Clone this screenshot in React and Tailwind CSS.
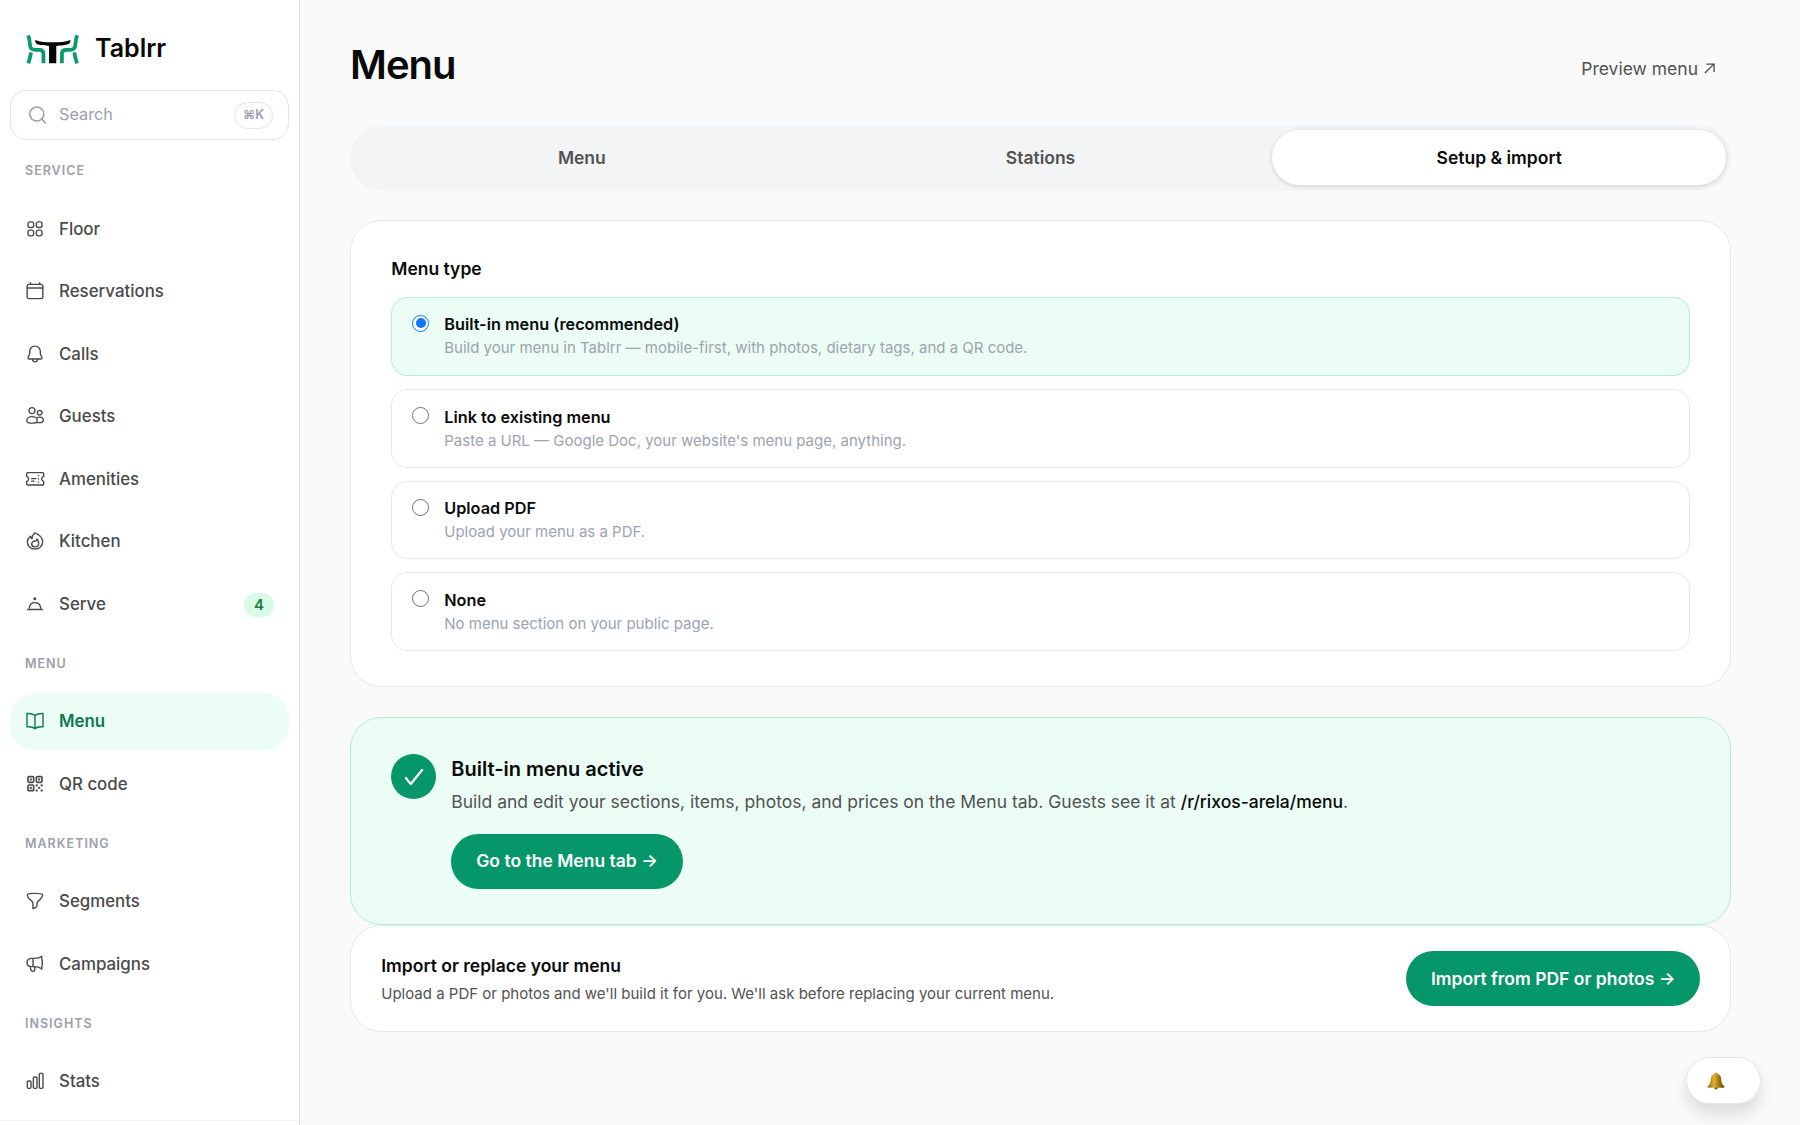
import React, { useState } from 'react';
import clsx from 'clsx';

const Icon = ({ children, className }) => (
  <svg
    viewBox="0 0 60 60"
    className={clsx('w-5 h-5 shrink-0', className)}
    fill="none"
    stroke="currentColor"
    strokeWidth="4.2"
    strokeLinecap="round"
    strokeLinejoin="round"
  >
    {children}
  </svg>
);

const icons = {
  floor: (
    <Icon>
      <rect x="9" y="8.5" width="17" height="17" rx="6" />
      <rect x="34" y="8.5" width="17" height="17" rx="6" />
      <rect x="9" y="33.5" width="17" height="17" rx="6" />
      <rect x="34" y="33.5" width="17" height="17" rx="6" />
    </Icon>
  ),
  calendar: (
    <Icon>
      <rect x="6.5" y="10" width="47" height="43" rx="6" />
      <path d="M7 21h46M16 5v5M44 5v5" />
    </Icon>
  ),
  bell: (
    <Icon>
      <path d="M30 6.500c-10 0-16 7-16 16v6c0 6-5 9-5 13.500 0 2 1 3 3 3h36c2 0 3-1 3-3 0-4.500-5-7.500-5-13.500v-6c0-9-6-16-16-16z" />
      <path d="M22 46c1 5 4 7.500 8 7.500s7-2.500 8-7.500" />
    </Icon>
  ),
  guests: (
    <Icon>
      <circle cx="21" cy="14" r="9" />
      <circle cx="44" cy="20" r="7" />
      <path d="M5.500 44c0-7 7-12 15.500-12s15.500 5 15.500 12c0 5-6 7.500-15.500 7.500S5.500 49 5.500 44z" />
      <path d="M36 35.500c2-1.500 5-2 8-2 6.500 0 11 4 11 8.500S51 50 44 50h-8" />
    </Icon>
  ),
  ticket: (
    <Icon>
      <path d="M8 11h45c2 0 3 1 3 3v8c-4 1-6 4-6 7.500s2 6.500 6 7.500v8c0 2-1 3-3 3H8c-2 0-3-1-3-3v-8c4-1 6-4 6-7.500S9 23 5 22v-8c0-2 1-3 3-3z" />
      <path d="M20 29h13M20 36.500h7M40.500 19v1M40.500 29v1M40.500 38.500v1" />
    </Icon>
  ),
  flame: (
    <Icon>
      <path d="M30 5.500c-6 5-9 11-9 18-3-1-4-4-4.500-8C10 21 7 27 7 32c0 13 10 22 23 22s23-9 23-22c0-10-8-20-23-26.500z" />
      <path d="M36 24c-1 4-3 6-6 7-2-1-4-1-5 0-3 2-5 5-5 8 0 5 4 8.500 10 8.500s11-4 11-10c0-5-2-10-5-13.500z" />
    </Icon>
  ),
  cloche: (
    <Icon>
      <circle cx="29.500" cy="14.500" r="2.500" fill="currentColor" />
      <path d="M8 46.500h44M13 42c1-10 8-16 17-16s16 6 17 16" />
    </Icon>
  ),
  book: (
    <Icon>
      <path d="M30 13c-5-4-13-6-24-5.500v40c11-.5 19 1 24 5.500 5-4.500 13-6 24-5.500v-40C43 7 35 9 30 13zM30 13v39" />
    </Icon>
  ),
  qr: (
    <Icon>
      <g strokeWidth="5">
        <rect x="9" y="8" width="17" height="17" rx="3" />
        <rect x="34" y="8" width="17" height="17" rx="3" />
        <rect x="9" y="33" width="17" height="17" rx="3" />
      </g>
      <g fill="currentColor" stroke="none">
        <rect x="14.5" y="13.5" width="6" height="6" />
        <rect x="39.5" y="13.5" width="6" height="6" />
        <rect x="14.5" y="38.5" width="6" height="6" />
        <rect x="32" y="31" width="6" height="6" />
        <rect x="47" y="31" width="6" height="6" />
        <rect x="39.5" y="38.5" width="6" height="6" />
        <rect x="32" y="46.5" width="6" height="6" />
        <rect x="47" y="46.5" width="6" height="6" />
      </g>
    </Icon>
  ),
  funnel: (
    <Icon>
      <path d="M7 11c0-2 10-4 23-4s23 2 23 4c0 8-5 12-12 18-4 3-5 6-5 10v6c0 3-9 8-12 8V39c0-4-1-7-5-10C12 23 7 19 7 11z" />
    </Icon>
  ),
  megaphone: (
    <Icon>
      <path d="M51 7c-7 5-15 6-24 6h-7C11 13 6 18 6 25.500S11 38 20 38h7c9 0 17 2 24 7M49 8c4 12 4 25 0 37M24 14v24M16 39c0 7 3 13 9 13 4 0 5-4 4-13" />
    </Icon>
  ),
  stats: (
    <Icon>
      <rect x="7" y="30" width="11" height="22" rx="3" />
      <rect x="25" y="18" width="11" height="34" rx="3" />
      <rect x="43" y="7" width="11" height="45" rx="3" />
    </Icon>
  ),
};

const sections = [
  {
    title: 'SERVICE',
    items: [
      { label: 'Floor', icon: 'floor' },
      { label: 'Reservations', icon: 'calendar' },
      { label: 'Calls', icon: 'bell' },
      { label: 'Guests', icon: 'guests' },
      { label: 'Amenities', icon: 'ticket' },
      { label: 'Kitchen', icon: 'flame' },
      { label: 'Serve', icon: 'cloche', badge: 4 },
    ],
  },
  {
    title: 'MENU',
    items: [
      { label: 'Menu', icon: 'book', active: true },
      { label: 'QR code', icon: 'qr' },
    ],
  },
  {
    title: 'MARKETING',
    items: [
      { label: 'Segments', icon: 'funnel' },
      { label: 'Campaigns', icon: 'megaphone' },
    ],
  },
  {
    title: 'INSIGHTS',
    items: [{ label: 'Stats', icon: 'stats' }],
  },
];

const tabs = ['Menu', 'Stations', 'Setup & import'];

const menuTypes = [
  {
    id: 'builtin',
    title: 'Built-in menu (recommended)',
    text: 'Build your menu in Tablrr — mobile-first, with photos, dietary tags, and a QR code.',
  },
  {
    id: 'link',
    title: 'Link to existing menu',
    text: "Paste a URL — Google Doc, your website's menu page, anything.",
  },
  { id: 'pdf', title: 'Upload PDF', text: 'Upload your menu as a PDF.' },
  { id: 'none', title: 'None', text: 'No menu section on your public page.' },
];

const Logo = () => (
  <svg viewBox="78 104 162 88" className="w-[54px] h-[29px]" fill="none">
    <g stroke="#0b9a69" strokeWidth="11.5">
      <path d="M83 105c7 10 4 28 8 37 3 6 8 7 16 7h10c9 0 13 4 13 12v29" />
      <path d="M92 157c-1 12-4 21-8 33" />
      <path d="M233 105c-7 10-4 28-8 37-3 6-8 7-16 7h-10c-9 0-13 4-13 12v29" />
      <path d="M224 157c1 12 4 21 8 33" />
    </g>
    <path
      d="M105 119c15 6 32 7 53 7s38-1 54-7c0 8-3 12-10 14-9 3-21 3-33 4v53h-22v-53c-12-1-24-1-33-4-6-2-9-6-9-14z"
      fill="#050505"
    />
  </svg>
);

const Sidebar = () => (
  <aside className="w-[300px] shrink-0 h-full bg-white border-r border-[#e0e2e4] flex flex-col">
    <div className="flex-1 overflow-hidden px-[10px]">
      <div className="h-[90px] pl-4 pt-[35px] flex items-start gap-[15px]">
        <Logo />
        <span className="text-[25px] leading-[30px] -mt-[2px] font-semibold text-[#0a0a0a]">Tablrr</span>
      </div>
      <div className="h-[50px] flex items-center rounded-[16px] border border-[#e2e4e7] pl-[17px] pr-[15px]">
        <svg viewBox="0 0 20 20" className="w-5 h-5" fill="none" stroke="#9ca0a8" strokeWidth="1.600" strokeLinecap="round">
          <circle cx="8.800" cy="9" r="7" />
          <path d="M13.800 14l3.700 4" />
        </svg>
        <span className="ml-[11px] pb-px text-[16.25px] text-[#9ca0a8]">Search</span>
        <span className="ml-auto h-[27px] w-[39px] flex items-center justify-center rounded-full border border-[#e2e4e7] text-[12.5px] font-semibold text-[#9a9ea7]">
          ⌘K
        </span>
      </div>
      {sections.map((section) => (
        <div key={section.title}>
          <div className="h-[60px] pt-[3px] pl-[15px] flex items-center text-[12.5px] font-semibold tracking-[1px] text-[#9ca0aa]">
            {section.title}
          </div>
          <div className="flex flex-col gap-[5px]">
            {section.items.map((item) => (
              <a
                key={item.label}
                className={clsx(
                  'h-[57.5px] flex items-center pl-[15px] pr-[15px] gap-[14px] rounded-[25px] text-[16.875px]',
                  item.active ? 'bg-[#ebfdf5] text-[#0b7a55] font-semibold' : 'text-[#4a4a4a] font-medium'
                )}
              >
                {icons[item.icon]}
                <span className="pt-[1.5px]">{item.label}</span>
                {item.badge && (
                  <span className="ml-auto mt-[3px] w-[30px] h-6 rounded-full bg-[#d9fae6] text-[#14803c] text-[15px] font-semibold flex items-center justify-center">
                    {item.badge}
                  </span>
                )}
              </a>
            ))}
          </div>
        </div>
      ))}
    </div>
    <div className="h-[5px] border-t border-[#eceef0]" />
  </aside>
);

const MenuTypeCard = ({ selected, onSelect }) => (
  <section className="mt-[29px] h-[467px] rounded-[31px] border border-[#e6e8ea] bg-white px-[40.25px] pt-[35px]">
    <h2 className="text-[17.5px] leading-[25px] font-semibold text-[#0a0a0a]">Menu type</h2>
    <div className="mt-[15.5px] flex flex-col gap-[13px]">
      {menuTypes.map((type) => {
        const checked = type.id === selected;
        return (
          <label
            key={type.id}
            className={clsx(
              'rounded-[16px] border flex items-start pl-5',
              checked
                ? 'h-[79.5px] pt-[14.5px] bg-[#ebfdf5] border-[#b0f0d2]'
                : 'h-[78.5px] pt-[14.5px] bg-white border-[#e6e8ea]'
            )}
          >
            <input type="radio" className="sr-only" checked={checked} onChange={() => onSelect(type.id)} />
            <span
              className={clsx(
                'mt-[2.5px] w-[17px] h-[17px] rounded-full flex items-center justify-center bg-white',
                checked ? 'border-[1.5px] border-[#0a75ff]' : 'border border-[#707070]'
              )}
            >
              {checked && <span className="w-[10px] h-[10px] rounded-full bg-[#0a75ff]" />}
            </span>
            <span className="ml-[15px] flex flex-col">
              <span className="text-[16.25px] leading-[24px] font-semibold text-[#0a0a0a]">{type.title}</span>
              <span className="text-[15px] leading-[23px] text-[#9ca3af]">{type.text}</span>
            </span>
          </label>
        );
      })}
    </div>
  </section>
);

const ActiveCard = () => (
  <section className="mt-[30px] h-[208px] rounded-[31px] border border-[#b0f0d2] bg-[#ebfdf5] pl-[40.25px] pt-9 flex items-start gap-[15px]">
    <span className="w-[45px] h-[45px] rounded-full bg-[#059669] flex items-center justify-center">
      <svg viewBox="0 0 20 20" className="w-5 h-5" fill="none" stroke="white" strokeWidth="2.200" strokeLinecap="round" strokeLinejoin="round">
        <path d="M1.800 11l5 6L18.300 2.800" />
      </svg>
    </span>
    <div>
      <h2 className="text-[20px] leading-[31px] font-semibold text-[#0a0a0a]">Built-in menu active</h2>
      <p className="mt-[3px] text-[17.5px] leading-[28px] text-[#525252]">
        Build and edit your sections, items, photos, and prices on the Menu tab. Guests see it at{' '}
        <span className="font-medium text-[#0a0a0a]">/r/rixos-arela/menu</span>.
      </p>
      <button className="mt-[17.5px] h-[55px] px-[25px] rounded-full bg-[#059669] text-white text-[17.5px] font-semibold">
        Go to the Menu tab →
      </button>
    </div>
  </section>
);

const ImportCard = () => (
  <section className="h-[107px] rounded-[31px] border border-[#e6e8ea] bg-white pl-[30.25px] pr-[30px] flex items-center justify-between">
    <div className="pt-[2px]">
      <h2 className="text-[17.5px] leading-[26px] font-semibold text-[#0a0a0a]">Import or replace your menu</h2>
      <p className="mt-[2px] text-[15px] leading-[25px] text-[#525252]">
        Upload a PDF or photos and we'll build it for you. We'll ask before replacing your current menu.
      </p>
    </div>
    <button className="h-[55px] px-[24.5px] pt-px rounded-full bg-[#059669] text-white text-[17.5px] font-semibold">
      Import from PDF or photos →
    </button>
  </section>
);

const App = () => {
  const [tab, setTab] = useState('Setup & import');
  const [menuType, setMenuType] = useState('builtin');

  return (
    <div className="w-[1800px] h-[1125px] overflow-hidden flex bg-[#fafafa] font-['Inter',sans-serif] antialiased">
      <Sidebar />
      <main className="flex-1 pl-[50px] pr-[69px]">
        <header className="h-[125px] flex items-start justify-between pr-4">
          <h1 className="mt-10 text-[40px] leading-[50px] tracking-[-1px] font-semibold text-[#0a0a0a]">Menu</h1>
          <a className="mt-[56px] text-[17.5px] leading-[26px] text-[#525252]">
            Preview menu
            <svg viewBox="0 0 12 12" className="inline w-[11px] h-[11px] ml-[6px] mb-[3px]" fill="none" stroke="currentColor" strokeWidth="1.500">
              <path d="M1 11L10.500 1.500M2.500 1.200h8.500v8.500" />
            </svg>
          </a>
        </header>
        <div className="h-[66px] p-[5px] flex gap-[5px] rounded-[33px] bg-[#f3f4f6]">
          {tabs.map((name) => (
            <button
              key={name}
              onClick={() => setTab(name)}
              className={clsx(
                'h-[55px] pt-px flex-1 rounded-full text-[17.5px] font-semibold',
                name === tab ? 'bg-white text-[#0a0a0a] shadow-[0_1px_4px_rgba(0,0,0,0.16)]' : 'text-[#525252]'
              )}
            >
              {name}
            </button>
          ))}
        </div>
        <MenuTypeCard selected={menuType} onSelect={setMenuType} />
        <ActiveCard />
        <ImportCard />
      </main>

      {/* Notification pill */}
      <button className="absolute left-[1686px] top-[1057px] w-[75px] h-[47px] pl-5 rounded-full border border-[#e4e6e8] bg-white shadow-[0_10px_16px_rgba(0,0,0,0.12)]">
        <svg viewBox="0 0 18 18" className="w-[18px] h-[18px]">
          <defs>
            <linearGradient id="bell" x1="0" x2="1" y1="0" y2="0">
              <stop offset="0" stopColor="#94690a" />
              <stop offset="0.4" stopColor="#dfb235" />
              <stop offset="0.65" stopColor="#a87a0e" />
              <stop offset="1" stopColor="#5e4208" />
            </linearGradient>
          </defs>
          <circle cx="9" cy="15.600" r="1.900" fill="#7c5607" />
          <path d="M9 .5c1 0 1.500.6 1.700 1.400 2.300.7 3.300 2.600 3.500 5 .3 3.800.8 5.600 3.200 7.400.3 1-.6 1.500-1.600 1.500H2.200c-1 0-1.900-.5-1.600-1.500C3 12.500 3.500 10.700 3.800 6.900c.2-2.400 1.200-4.300 3.500-5C7.500 1.100 8 .5 9 .5z" fill="url(#bell)" />
        </svg>
      </button>
    </div>
  );
};

export default App;
